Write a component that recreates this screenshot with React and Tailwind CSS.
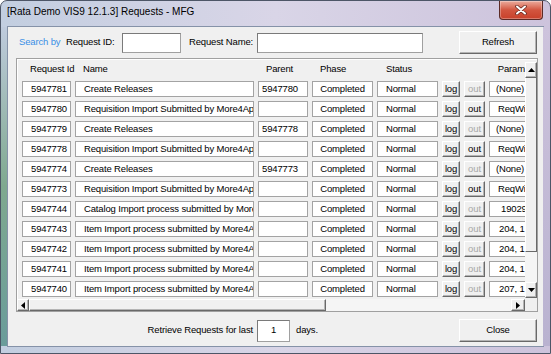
const rows = [
  { id: '5947781', name: 'Create Releases', parent: '5947780', out: false, param: '(None)', pp: 'pl-[6px]' },
  { id: '5947780', name: 'Requisition Import Submitted by More4Apps', parent: '', out: true, param: 'ReqWiz', pp: 'pl-[8px]' },
  { id: '5947779', name: 'Create Releases', parent: '5947778', out: false, param: '(None)', pp: 'pl-[6px]' },
  { id: '5947778', name: 'Requisition Import Submitted by More4Apps', parent: '', out: true, param: 'ReqWiz', pp: 'pl-[8px]' },
  { id: '5947774', name: 'Create Releases', parent: '5947773', out: false, param: '(None)', pp: 'pl-[6px]' },
  { id: '5947773', name: 'Requisition Import Submitted by More4Apps', parent: '', out: true, param: 'ReqWiz', pp: 'pl-[8px]' },
  { id: '5947744', name: 'Catalog Import process submitted by More4Apps', parent: '', out: false, param: '19029, 1', pp: 'pl-[11px]' },
  { id: '5947743', name: 'Item Import process submitted by More4Apps', parent: '', out: false, param: '204, 1', pp: 'pl-[9px]' },
  { id: '5947742', name: 'Item Import process submitted by More4Apps', parent: '', out: false, param: '204, 1', pp: 'pl-[9px]' },
  { id: '5947741', name: 'Item Import process submitted by More4Apps', parent: '', out: false, param: '204, 1', pp: 'pl-[9px]' },
  { id: '5947740', name: 'Item Import process submitted by More4Apps', parent: '', out: false, param: '207, 1', pp: 'pl-[9px]' },
]

const cell = 'h-[16px] shrink-0 bg-white border border-[#a3a3a3] flex items-center overflow-hidden whitespace-nowrap'
const raised = 'bg-[#f0f0f0] border border-t-white border-l-white border-r-[#696969] border-b-[#696969] shadow-[inset_-1px_-1px_0_#b4b4b4]'
const field = 'bg-white border border-[#a0a0a0] border-t-[#7a7a7a] border-l-[#7a7a7a]'

function Arrow({ dir }) {
  const pts = {
    up: '0,4 3.5,0 7,4',
    down: '0,0 3.5,4 7,0',
    left: '4,0 0,3.5 4,7',
    right: '0,0 4,3.5 0,7',
  }
  const vertical = dir === 'up' || dir === 'down'
  return (
    <svg width={vertical ? 7 : 4} height={vertical ? 4 : 7} viewBox={vertical ? '0 0 7 4' : '0 0 4 7'}>
      <polygon points={pts[dir]} fill="#000" />
    </svg>
  )
}

function Row({ r }) {
  return (
    <div className="h-[20px] flex items-center pl-[5px] gap-[4px] shrink-0">
      <div className={`${cell} w-[49px] pl-[8px]`}>{r.id}</div>
      <div className={`${cell} w-[179px] pl-[8px]`}>{r.name}</div>
      <div className={`${cell} w-[50px] pl-[3px]`}>{r.parent}</div>
      <div className={`${cell} w-[61px] justify-center`}>Completed</div>
      <div className={`${cell} w-[61px] pl-[8px]`}>Normal</div>
      <div className={`${raised} h-[16px] w-[18px] shrink-0 flex items-center justify-center`}>log</div>
      <div className={`${raised} h-[16px] w-[21px] shrink-0 flex items-center justify-center ${r.out ? 'text-black' : 'text-[#a7a7a7]'}`}>out</div>
      <div className={`${cell} w-[42px] ${r.pp}`}>{r.param}</div>
    </div>
  )
}

export default function App() {
  return (
    <div className="w-[551px] h-[354px] rounded-t-[7px] border border-[#4d5667] overflow-hidden flex flex-col bg-gradient-to-r from-[#c2cee0] via-[#d9d5e7] to-[#cdc3dc] font-['Liberation_Sans',Arial,sans-serif] text-[9.5px] tracking-[-0.15px] text-black">
      <div className="h-[26px] flex items-start shrink-0">
        <span className="pl-[6px] pt-[6px] text-[10px] tracking-normal leading-none">[Rata Demo VIS9 12.1.3] Requests - MFG</span>
        <div className="ml-auto mr-[7px] w-[44px] h-[19px] rounded-b-[4px] border border-t-0 border-[#5b2a25] bg-gradient-to-b from-[#eaab9d] via-[#d2553f] to-[#c8402a] shadow-[inset_0_0_0_1px_rgba(255,255,255,0.3)] flex items-center justify-center">
          <svg width="12" height="10" viewBox="0 0 12 10">
            <path d="M2 1.5 L10 8.5 M10 1.5 L2 8.5" stroke="#6a2a22" strokeWidth="3.6" strokeLinecap="round" />
            <path d="M2 1.5 L10 8.5 M10 1.5 L2 8.5" stroke="#fff" strokeWidth="2" strokeLinecap="round" />
          </svg>
        </div>
      </div>

      <div className="flex-1 flex">
        <div className="w-[7px] bg-gradient-to-b from-[#bfcbdd] via-[#7fa98f] to-[#6a9c9a]" />
        <div className="flex-1 bg-[#f0f0f0] shadow-[0_0_0_1px_#8592a8] flex flex-col">
          <div className="mt-[4px] h-[23px] flex items-center pl-[11px]">
            <span className="w-[47px] text-[#3a8fe6]">Search by</span>
            <span className="w-[56px]">Request ID:</span>
            <div className={`${field} w-[59px] h-[20px]`} />
            <span className="ml-[8px] w-[68px]">Request Name:</span>
            <div className={`${field} w-[166px] h-[20px]`} />
            <div className={`${raised} ml-auto mr-[6px] w-[78px] h-[23px] flex items-center justify-center`}>Refresh</div>
          </div>

          <div className="mt-[4px] ml-[8px] w-[522px] h-[254px] border border-[#a0a0a0] shadow-[inset_1px_1px_0_#fff] flex flex-col">
            <div className="flex h-[240px]">
              <div className="w-[508px] flex flex-col overflow-hidden">
                <div className="h-[20px] flex items-center pl-[5px] gap-[4px] shrink-0">
                  <span className="w-[49px] pl-[8px] shrink-0 whitespace-nowrap">Request Id</span>
                  <span className="w-[179px] pl-[8px] shrink-0">Name</span>
                  <span className="w-[50px] pl-[8px] shrink-0">Parent</span>
                  <span className="w-[61px] pl-[8px] shrink-0">Phase</span>
                  <span className="w-[61px] pl-[9px] shrink-0">Status</span>
                  <span className="w-[18px] shrink-0" />
                  <span className="w-[21px] shrink-0" />
                  <span className="w-[36px] text-right shrink-0">Param</span>
                </div>
                {rows.map((r) => (
                  <Row key={r.id} r={r} />
                ))}
              </div>
              <div className="w-[12px] flex flex-col">
                <div className="h-[3px]" />
                <div className={`${raised} h-[16px] flex items-center justify-center`}>
                  <Arrow dir="up" />
                </div>
                <div className="h-[174px] border-r border-b border-[#696969] border-l border-l-white" />
                <div className="flex-1 bg-[#f5f5f5]" />
                <div className={`${raised} h-[16px] flex items-center justify-center`}>
                  <Arrow dir="down" />
                </div>
                <div className="h-[1px]" />
              </div>
            </div>
            <div className="flex h-[12px]">
              <div className={`${raised} w-[12px] flex items-center justify-center`}>
                <Arrow dir="left" />
              </div>
              <div className={`${raised} w-[297px]`} />
              <div className="flex-1 bg-[#f5f5f5]" />
              <div className={`${raised} w-[14px] flex items-center justify-center`}>
                <Arrow dir="right" />
              </div>
              <div className="w-[12px] bg-[#f0f0f0]" />
            </div>
          </div>

          <div className="mt-[7px] h-[23px] flex items-center">
            <span className="w-[249px] text-right pr-[4px]">Retrieve Requests for last</span>
            <div className={`${field} w-[33px] h-[22px] flex items-center justify-center`}>1</div>
            <span className="ml-[6px]">days.</span>
            <div className={`${raised} ml-auto mr-[6px] w-[78px] h-[23px] flex items-center justify-center`}>Close</div>
          </div>
        </div>
        <div className="w-[7px] bg-gradient-to-b from-[#cdc3dc] to-[#b9b2d0]" />
      </div>
      <div className="h-[7px] shrink-0" />
    </div>
  )
}
